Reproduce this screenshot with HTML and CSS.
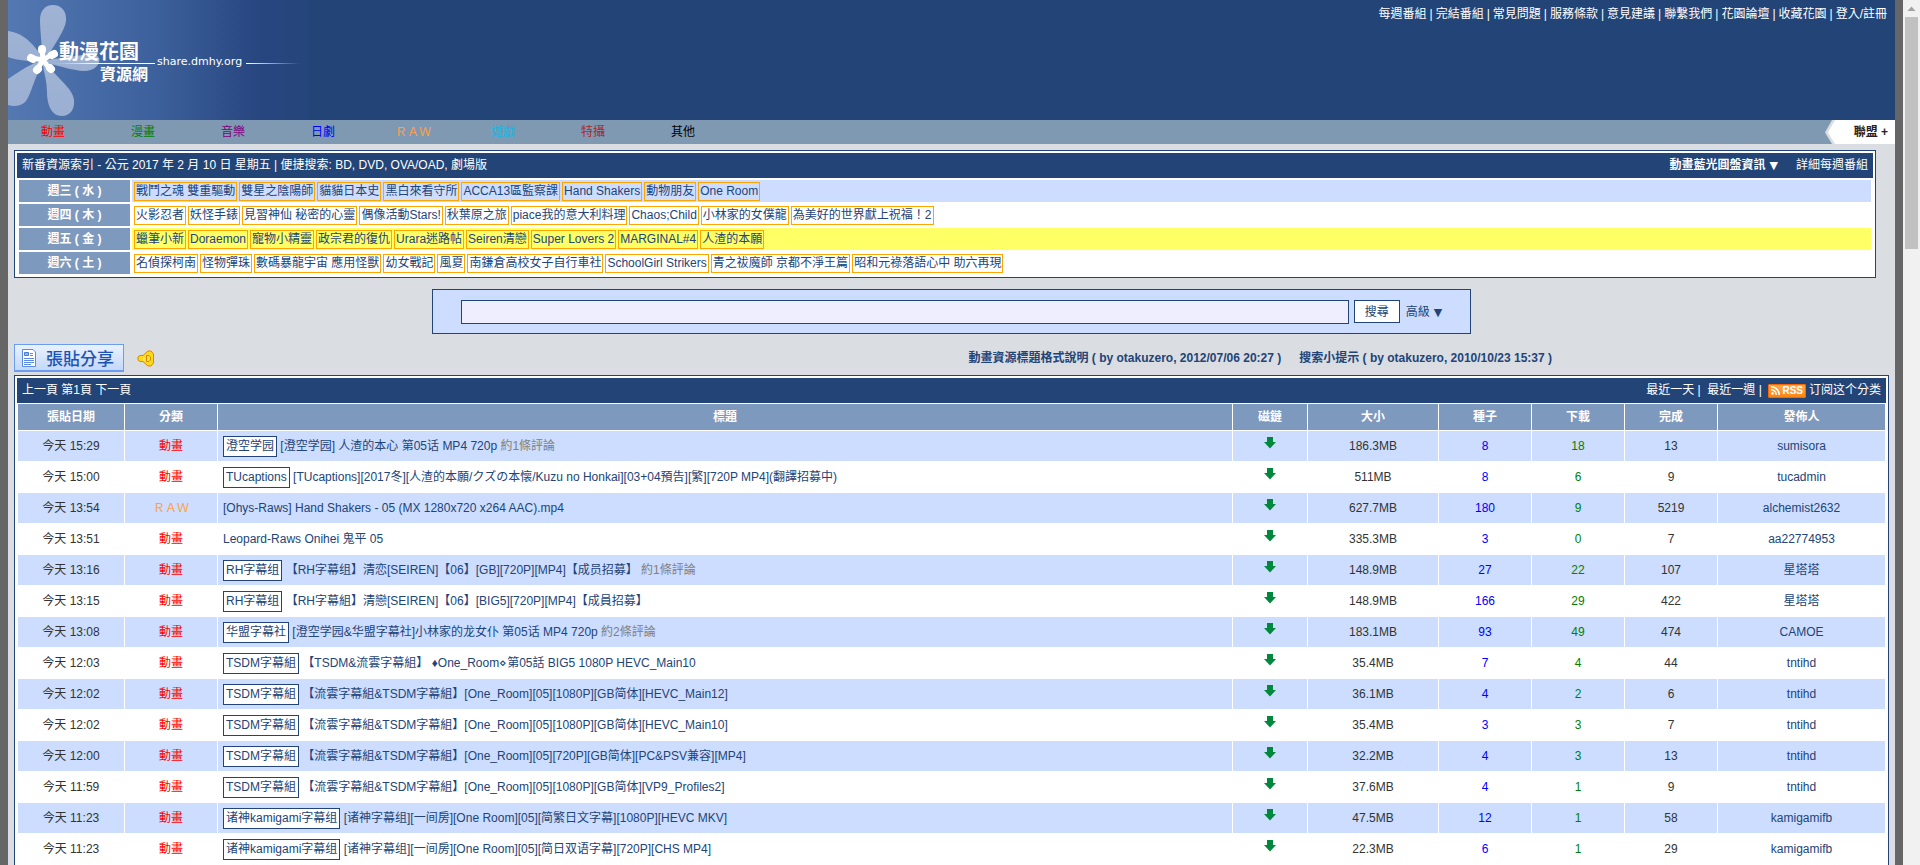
FILE: index.html
```html
<!DOCTYPE html>
<html lang="zh-Hant">
<head>
<meta charset="utf-8">
<title>動漫花園資源網</title>
<link rel="stylesheet" href="styles.css">
</head>
<body>
<div class="page">
  <header class="header">
    <a class="logo" href="#">
      <svg class="logo-art" width="300" height="120" viewBox="0 0 300 120" aria-hidden="true">
        <defs>
          <linearGradient id="lg"><stop offset="0" stop-color="#5378b2"/><stop offset=".5" stop-color="#3c609b"/><stop offset=".85" stop-color="#27457f"/><stop offset="1" stop-color="#26457c"/></linearGradient>
          <linearGradient id="petal" x1="0" y1="0" x2="0" y2="1"><stop offset="0" stop-color="#9fb3d4"/><stop offset="1" stop-color="#9bafd3"/></linearGradient>
          <linearGradient id="tail"><stop offset="0" stop-color="#fff"/><stop offset="1" stop-color="#fff" stop-opacity="0"/></linearGradient>
          <linearGradient id="lead"><stop offset="0" stop-color="#fff" stop-opacity="0"/><stop offset=".4" stop-color="#fff"/></linearGradient>
        </defs>
        <rect width="300" height="120" fill="url(#lg)"/>
        <g fill="url(#petal)">
          <path d="M34 58C34 44 32 30 32 20C32 11 37 5 45 5C53 5 59 11 58 21C57 30 48 42 38 59Z"/>
          <path d="M34 58C30 49 18 36 8 33C5 32 2 31 0 31V57C8 60 22 62 34 61Z"/>
          <path d="M36 60C50 59 72 55 84 54C92 55 94 61 88 67C84 71 76 72 68 70C56 68 44 64 36 62Z"/>
          <path d="M32 61C18 66 8 74 0 79V105C6 107 14 106 18 101C24 92 26 78 35 63Z"/>
          <path d="M34 62C36 72 39 82 39 92C39 104 43 116 54 116C62 116 67 109 66 100C65 88 48 78 38 62Z"/>
        </g>
        <g fill="none" stroke="#fff" stroke-linecap="round">
          <path d="M34 49L35 60L43 55M24 58L35 60L29 70M35 60L42 69" stroke-width="5"/>
          <path d="M34 49V50M23 58L25 59M46 54L44 55M29 70L30 69M43 69L42 68" stroke-width="8"/>
        </g>
        <rect x="48" y="63" width="99" height="1" fill="url(#lead)"/>
        <rect x="238" y="63" width="54" height="1" fill="url(#tail)"/>
      </svg>
      <span class="logo-name">動漫花園</span>
      <span class="logo-sub">資源網</span>
      <span class="logo-host">share.dmhy.org</span>
    </a>
    <nav class="toplinks"><a href="#">每週番組</a> | <a href="#">完結番組</a> | <a href="#">常見問題</a> | <a href="#">服務條款</a> | <a href="#">意見建議</a> | <a href="#">聯繫我們</a> | <a href="#">花園論壇</a> | <a href="#">收藏花園</a> | <a href="#">登入/註冊</a></nav>
  </header>
  <nav class="catnav">
    <a class="c-anime" href="#">動畫</a><a class="c-comic" href="#">漫畫</a><a class="c-music" href="#">音樂</a><a class="c-drama" href="#">日劇</a><a class="c-raw" href="#">ＲＡＷ</a><a class="c-game" href="#">遊戲</a><a class="c-sfx" href="#">特攝</a><a class="c-other" href="#">其他</a>
    <a class="union" href="#"><svg width="20" height="24" viewBox="0 0 20 24" aria-hidden="true"><path d="M7 0H20V24H7L0 12.500Z" fill="#dadde2"/><path d="M10 0H20V24H10L3 12.500Z" fill="#fff"/></svg><span>聯盟 +</span></a>
  </nav>
  <main class="main">
    <section class="panel index">
      <div class="bar">
        <div>新番資源索引 - 公元 2017 年 2 月 10 日 星期五 | 便捷搜索: <a href="#">BD</a>, <a href="#">DVD</a>, <a href="#">OVA/OAD</a>, <a href="#">劇場版</a></div>
        <div class="bar-links"><a class="strong" href="#">動畫藍光圓盤資訊<span class="caret">▼</span></a><a href="#">詳細每週番組</a></div>
      </div>
      <table class="week">
        <tr class="blue"><th scope="row">週三 ( 水 )</th><td><div class="chips"><a href="#">戰鬥之魂 雙重驅動</a><a href="#">雙星之陰陽師</a><a href="#">貓貓日本史</a><a href="#">黑白來看守所</a><a href="#">ACCA13區監察課</a><a href="#">Hand Shakers</a><a href="#">動物朋友</a><a href="#">One Room</a></div></td></tr>
        <tr><th scope="row">週四 ( 木 )</th><td><div class="chips"><a href="#">火影忍者</a><a href="#">妖怪手錶</a><a href="#">見習神仙 秘密的心靈</a><a href="#">偶像活動Stars!</a><a href="#">秋葉原之旅</a><a href="#">piace我的意大利料理</a><a href="#">Chaos;Child</a><a href="#">小林家的女僕龍</a><a href="#">為美好的世界獻上祝福！2</a></div></td></tr>
        <tr class="today"><th scope="row">週五 ( 金 )</th><td><div class="chips"><a href="#">蠟筆小新</a><a href="#">Doraemon</a><a href="#">寵物小精靈</a><a href="#">政宗君的復仇</a><a href="#">Urara迷路帖</a><a href="#">Seiren清戀</a><a href="#">Super Lovers 2</a><a href="#">MARGINAL#4</a><a href="#">人渣的本願</a></div></td></tr>
        <tr><th scope="row">週六 ( 土 )</th><td><div class="chips"><a href="#">名偵探柯南</a><a href="#">怪物彈珠</a><a href="#">數碼暴龍宇宙 應用怪獸</a><a href="#">幼女戰記</a><a href="#">風夏</a><a href="#">南鎌倉高校女子自行車社</a><a href="#">SchoolGirl Strikers</a><a href="#">青之祓魔師 京都不淨王篇</a><a href="#">昭和元祿落語心中 助六再現</a></div></td></tr>
      </table>
    </section>
    <form class="search">
      <input class="q" type="text" aria-label="搜尋">
      <button class="go" type="button">搜尋</button>
      <a href="#">高級<span class="caret">▼</span></a>
    </form>
    <div class="tools">
      <button class="post" type="button">
        <svg width="14" height="18" viewBox="0 0 14 18" aria-hidden="true"><path d="M.5.5H11L13.500 3V17.500H.5Z" fill="#fff" stroke="#5b8be0"/><path d="M2.500 3.500h4v3h-4z" fill="#8fb5f2" stroke="#4a7cd8"/><path d="M8 4.500h3M8 6.500h3M2 9.500h10M2 11.500h10M2 13.500h10M2 15.500h7" stroke="#5b8be0"/></svg>
        張貼分享
      </button>
      <svg class="horn" width="18" height="17" viewBox="0 0 18 17" aria-hidden="true"><path d="M1 7L3 5.500H6L11 1H14L16.500 4V13L14 16H11L6 11.500H3L1 10Z" fill="#ffd91c" stroke="#d88a00"/><path d="M9.500 5.500H12L13.500 7V10L12 11.500H9.500Z" fill="#ffe23a" stroke="#d88a00"/><path d="M7 7v4" stroke="#fff3a0"/></svg>
      <div class="notes"><a href="#">動畫資源標題格式說明 ( by otakuzero, 2012/07/06 20:27 )</a><a href="#">搜索小提示 ( by otakuzero, 2010/10/23 15:37 )</a></div>
    </div>
    <section class="panel">
      <div class="bar">
        <div><a href="#">上一頁</a> 第1頁 <a href="#">下一頁</a></div>
        <div class="feed"><a href="#">最近一天</a> |&nbsp; <a href="#">最近一週</a> |&nbsp; <a class="rss" href="#"><svg width="9" height="9" viewBox="0 0 9 9" aria-hidden="true"><circle cx="1.500" cy="7.500" r="1.300" fill="#fff"/><path d="M0 3.800A5 5 0 0 1 5.200 9M0 .8A8 8 0 0 1 8.200 9" fill="none" stroke="#fff" stroke-width="1.500"/></svg>RSS</a> <a href="#">订阅这个分类</a></div>
      </div>
      <table class="list">
        <colgroup><col class="w-date"><col class="w-num"><col><col class="w-mag"><col class="w-size"><col class="w-num"><col class="w-num"><col class="w-num"><col class="w-user"></colgroup>
        <thead><tr><th>張貼日期</th><th>分類</th><th>標題</th><th>磁鏈</th><th>大小</th><th>種子</th><th>下載</th><th>完成</th><th>發佈人</th></tr></thead>
        <tbody id="rows"></tbody>
      </table>
    </section>
  </main>
</div>
<div class="scroll" aria-hidden="true"><svg width="17" height="17" viewBox="0 0 17 17"><path d="M4.500 11L8.500 6.500L12.500 11Z" fill="#a3a3a3"/></svg><div class="thumb"></div></div>
<script src="rows.js"></script>
</body>
</html>
```
FILE: rows.js
```js
const rows = [
  ['15:29', 0, '澄空学园', '[澄空学园] 人渣的本心 第05话 MP4 720p', 1, '186.3MB', 8, 18, 13, 'sumisora'],
  ['15:00', 0, 'TUcaptions', '[TUcaptions][2017冬][人渣的本願/クズの本懐/Kuzu no Honkai][03+04預告][繁][720P MP4](翻譯招募中)', 0, '511MB', 8, 6, 9, 'tucadmin'],
  ['13:54', 1, '', '[Ohys-Raws] Hand Shakers - 05 (MX 1280x720 x264 AAC).mp4', 0, '627.7MB', 180, 9, 5219, 'alchemist2632'],
  ['13:51', 0, '', 'Leopard-Raws Onihei 鬼平 05', 0, '335.3MB', 3, 0, 7, 'aa22774953'],
  ['13:16', 0, 'RH字幕组', '【RH字幕组】清恋[SEIREN]【06】[GB][720P][MP4]【成员招募】', 1, '148.9MB', 27, 22, 107, '星塔塔'],
  ['13:15', 0, 'RH字幕组', '【RH字幕組】清戀[SEIREN]【06】[BIG5][720P][MP4]【成員招募】', 0, '148.9MB', 166, 29, 422, '星塔塔'],
  ['13:08', 0, '华盟字幕社', '[澄空学园&华盟字幕社]小林家的龙女仆 第05话 MP4 720p', 2, '183.1MB', 93, 49, 474, 'CAMOE'],
  ['12:03', 0, 'TSDM字幕組', '【TSDM&流雲字幕組】 ♦One_Room⋄第05話 BIG5 1080P HEVC_Main10', 0, '35.4MB', 7, 4, 44, 'tntihd'],
  ['12:02', 0, 'TSDM字幕組', '【流雲字幕組&TSDM字幕組】[One_Room][05][1080P][GB简体][HEVC_Main12]', 0, '36.1MB', 4, 2, 6, 'tntihd'],
  ['12:02', 0, 'TSDM字幕組', '【流雲字幕組&TSDM字幕組】[One_Room][05][1080P][GB简体][HEVC_Main10]', 0, '35.4MB', 3, 3, 7, 'tntihd'],
  ['12:00', 0, 'TSDM字幕組', '【流雲字幕組&TSDM字幕組】[One_Room][05][720P][GB简体][PC&PSV兼容][MP4]', 0, '32.2MB', 4, 3, 13, 'tntihd'],
  ['11:59', 0, 'TSDM字幕組', '【流雲字幕組&TSDM字幕組】[One_Room][05][1080P][GB简体][VP9_Profiles2]', 0, '37.6MB', 4, 1, 9, 'tntihd'],
  ['11:23', 0, '诸神kamigami字幕组', '[诸神字幕组][一间房][One Room][05][简繁日文字幕][1080P][HEVC MKV]', 0, '47.5MB', 12, 1, 58, 'kamigamifb'],
  ['11:23', 0, '诸神kamigami字幕组', '[诸神字幕组][一间房][One Room][05][简日双语字幕][720P][CHS MP4]', 0, '22.3MB', 6, 1, 29, 'kamigamifb']
];
const esc = s => String(s).replace(/&/g, '&amp;');
const arrow = '<a href="#" aria-label="磁鏈"><svg width="12" height="12" viewBox="0 0 12 12"><path d="M3 0H9V5H12L6 11.500L0 5H3Z" fill="#00883c"/></svg></a>';
document.getElementById('rows').innerHTML = rows.map(([time, raw, team, title, notes, size, seeds, down, done, user]) => `<tr>
<td>今天 ${time}</td>
<td><a class="${raw ? 'c-raw' : 'c-anime'}" href="#">${raw ? 'ＲＡＷ' : '動畫'}</a></td>
<td class="title">${team ? `<a class="team" href="#">${team}</a> ` : ''}<a href="#">${esc(title)}</a>${notes ? ` <span class="notecount">約${notes}條評論</span>` : ''}</td>
<td class="mag">${arrow}</td><td>${size}</td><td class="seeds">${seeds}</td><td class="down">${down}</td><td>${done}</td><td><a href="#">${user}</a></td></tr>`).join('');
```
FILE: styles.css
```css
* { box-sizing: border-box; }
body {
  margin: 0;
  height: 100vh;
  overflow: hidden;
  display: flex;
  background: #666;
  color: #333;
  font: 12px/18px "Liberation Sans", "Noto Sans CJK TC", sans-serif;
}
a { color: #247; text-decoration: none; }
button, input { font: inherit; }
.page { flex: 1; min-width: 0; margin: 0 8px; background: #dadde2; overflow: hidden; }
.scroll { width: 17px; background: #f1f1f1; }
.scroll svg { display: block; }
.thumb { height: 232px; margin: 0 2px; background: #c1c1c1; }
.caret { margin-left: 4px; font: 11px/12px "DejaVu Sans", sans-serif; }

.header { display: flex; justify-content: space-between; height: 120px; background: #247; color: #fff; }
.header a { color: #fff; }
.logo { position: relative; }
.logo-art { display: block; }
.logo-name, .logo-sub, .logo-host { position: absolute; white-space: nowrap; }
.logo-name { left: 51px; top: 41px; font: bold 20px/20px "Noto Sans CJK TC", sans-serif; }
.logo-sub { left: 92px; top: 64px; font: bold 16px/18px "Noto Sans CJK TC", sans-serif; }
.logo-host { left: 149px; top: 54px; font: 11px/16px "DejaVu Sans", sans-serif; }
.toplinks { display: flex; gap: 3px; padding: 5px 8px; }

.catnav { display: flex; height: 24px; background: #7f99b3; line-height: 24px; }
.catnav > a { width: 90px; text-align: center; }
.catnav > .union { display: flex; width: 70px; margin-left: auto; }
.union svg { flex: none; }
.union span { flex: 1; padding-right: 7px; background: #fff; color: #222; font-weight: bold; text-align: right; }
a.c-anime { color: red; }
a.c-comic { color: green; }
a.c-music { color: purple; }
a.c-drama { color: blue; }
a.c-raw { color: #ffa042; }
a.c-game { color: #0eb9e7; }
a.c-sfx { color: brown; }
a.c-other { color: black; }

.main { padding: 6px; }
.panel { border: 1px solid #247; padding: 2px; background: #fff; }
.index { margin-right: 13px; padding-bottom: 1px; }
.bar { display: flex; justify-content: space-between; height: 25px; padding: 0 5px; background: #247; color: #fff; line-height: 25px; }
.bar a { color: #fff; }
.bar-links { display: flex; gap: 18px; }
.strong { font-weight: bold; }
.week { width: 100%; border-spacing: 2px; }
.week th { width: 111px; height: 22px; padding: 0; background: #7e99be; color: #fff; }
.week td { padding: 0 2px; }
.blue td { background: #cdf; }
.today td { background: #ff6; }
.chips { display: flex; gap: 2px; }
.chips a { height: 19px; padding: 0 1px; border: 1px solid orange; line-height: 17px; white-space: nowrap; }

.search { display: flex; align-items: center; width: fit-content; height: 45px; margin: 11px auto 10px; padding: 0 28px; border: 1px solid #247; background: #cdf; }
.q { width: 888px; height: 24px; border: 1px solid #247; background: #eef; }
.go { width: 46px; height: 23px; margin: 0 6px 0 5px; padding: 0; border: 1px solid #247; background: #fff; color: #247; }

.tools { display: flex; align-items: center; height: 28px; margin-bottom: 3px; }
.post { display: flex; align-items: center; gap: 10px; width: 110px; height: 28px; padding: 0 7px; border: 1px solid #6c9cf0; border-bottom-width: 2px; background: linear-gradient(#eaf2ff, #c4d8fa); color: #1b54b4; font: 500 17px/22px "Noto Sans CJK TC", sans-serif; white-space: nowrap; }
.post svg { flex: none; }
.horn { margin-left: 13px; }
.notes { display: flex; gap: 18px; margin-left: auto; padding-right: 337px; font-weight: bold; }

.feed { display: flex; align-items: center; white-space: pre; }
.rss { display: inline-flex; align-items: center; gap: 2px; height: 14px; margin-right: 3px; padding: 0 2px; border: 1px solid #f60; border-radius: 1px; background: linear-gradient(#ffab4a, #ff8410); font-size: 10px; font-weight: bold; line-height: 12px; }
.list { width: 100%; table-layout: fixed; border-spacing: 1px; text-align: center; }
.list th { height: 26px; padding: 0; background: #7e99be; color: #fff; }
.list td { height: 30px; padding: 0; }
.list tbody tr:nth-child(odd) td { background: #cdf; }
.list td.title { padding-left: 5px; text-align: left; white-space: nowrap; }
.team { display: inline-block; height: 21px; padding: 0 2px; border: 1px solid #247; background: #fff; line-height: 19px; }
.notecount { color: gray; }
.seeds { color: blue; }
.down { color: green; }
.mag svg { display: block; margin: 0 auto 6px; }
.w-date { width: 106px; }
.w-num { width: 92px; }
.w-mag { width: 74px; }
.w-size { width: 130px; }
.w-user { width: 167px; }
```
